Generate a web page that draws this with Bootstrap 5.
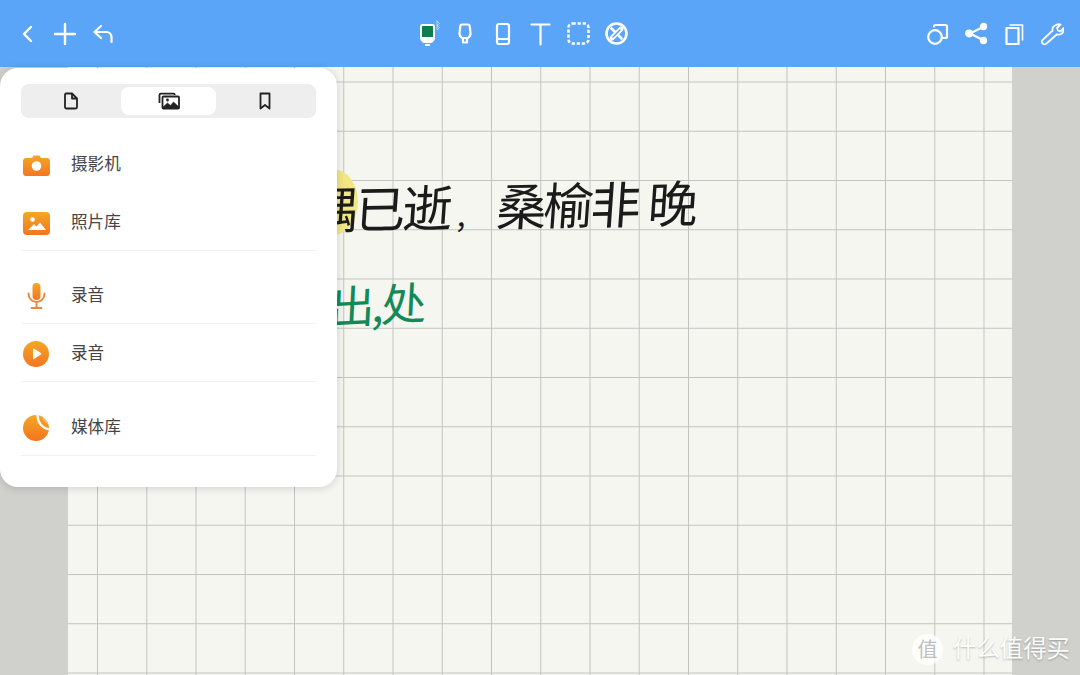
<!DOCTYPE html>
<html lang="zh-CN">
<head>
<meta charset="UTF-8">
<meta name="viewport" content="width=device-width, initial-scale=1.0">
<title>笔记</title>
<link rel="stylesheet" href="https://cdn.jsdelivr.net/npm/bootstrap@5.3.3/dist/css/bootstrap.min.css">
<style>
html, body { height: 100%; overflow: hidden; }
body { font-family: "Liberation Sans", "Noto Sans CJK SC", sans-serif; background: #d0d0cc; }
.app-shell { width: 1080px; height: 675px; position: relative; overflow: hidden; }
.top-bar { height: 67px; background: #5ba5f9; padding: 0 9px 0 8px; }
.top-bar svg { display: block; fill: none; stroke: #fff; stroke-width: 2.2; stroke-linecap: round; stroke-linejoin: round; }
.tool-slot { width: 38px; height: 38px; }
.slot-pen { padding-left: 6px; }
.tool-mid { margin-left: 2px; }
.stage { height: 608px; padding: 0 68px; }
.paper {
  height: 100%; position: relative; overflow: hidden; background-color: #f6f6f1;
  background-image: linear-gradient(to right, #c2c4bf 1px, transparent 1px), linear-gradient(to bottom, #c2c4bf 1px, transparent 1px);
  background-size: 49.25px 49.25px; background-position: 29px 14.5px;
}
.ink-mark { position: absolute; left: 240px; top: 102px; width: 50px; height: 66px; border-radius: 50%; background: #f3e684; }
.ink-line { position: absolute; white-space: nowrap; font-family: "Noto Sans CJK SC", sans-serif; line-height: 1; }
.ink-black { left: 194px; top: 112px; font-size: 50px; letter-spacing: -3px; color: #1b1b1b; transform: skewX(-5deg) rotate(-1deg); }
.ink-tick { display: inline-block; width: 47px; padding-left: 8px; font-size: 32px; }
.ink-late { margin-left: 10px; }
.ink-green { left: 262px; top: 213px; font-size: 45px; color: #128a57; transform: skewX(-6deg) rotate(-3deg); letter-spacing: -3px; }
.side-panel { position: absolute; left: 0; top: 68px; width: 337px; height: 419px; background: #fff; border-radius: 18px; box-shadow: 0 1px 8px rgba(0,0,0,.16); padding: 16px 21px 0; }
.seg-tabs { height: 34px; background: #eeeeee; border-radius: 8px; padding: 3px; }
.seg-item { width: 95px; height: 28px; border-radius: 8px; }
.seg-wide { width: 97px; padding-right: 3px; }
.seg-on { background: #fff; }
.seg-end { padding-left: 2px; }
.seg-tabs svg { display: block; fill: none; stroke: #222; stroke-width: 1.8; stroke-linejoin: round; }
.media-list { margin-top: 17px; }
.media-row { height: 58px; padding-top: 3px; font-size: 16.6px; color: #444; }
.row-line { border-bottom: 1px solid #f1f1f1; }
.gap-one { margin-top: 15px; }
.gap-two { margin-top: 16px; }
.media-ico { width: 30px; margin-right: 20px; }
.media-ico svg { display: block; margin: 0 auto; }
.mark-wm { position: absolute; left: 912px; top: 634px; color: #fff; text-shadow: 0 1px 2px rgba(0,0,0,.28); opacity: .92; }
.mark-disc { width: 31px; height: 31px; border-radius: 50%; background: rgba(255,255,255,.85); color: #bbb; font-size: 20px; text-shadow: none; }
.mark-name { margin-left: 10px; font-size: 23.4px; line-height: 1; }
</style>
</head>
<body>
<svg width="0" height="0" class="position-absolute">
  <defs>
    <linearGradient id="warm" x1="0" y1="0" x2="0" y2="1">
      <stop offset="0" stop-color="#f3a726"/>
      <stop offset="1" stop-color="#f5751f"/>
    </linearGradient>
  </defs>
</svg>

<div class="app-shell">
  <div class="top-bar d-flex align-items-center justify-content-between">
    <div class="d-flex align-items-center">
      <div class="tool-slot d-flex align-items-center justify-content-center"><svg width="14" height="20" viewBox="0 0 14 20"><path d="M11 3 4 10l7 7" stroke-width="2.400"/></svg></div>
      <div class="tool-slot d-flex align-items-center justify-content-center"><svg width="24" height="24" viewBox="0 0 24 24"><path d="M12 2v20M2 12h20" stroke-width="2.400"/></svg></div>
      <div class="tool-slot d-flex align-items-center justify-content-center"><svg width="22" height="20" viewBox="0 0 22 20"><path d="M9 2 2.500 8l6.500 6M2.500 8H14c3.500 0 5.500 2.500 5.500 5.500V18"/></svg></div>
    </div>

    <div class="tool-mid d-flex align-items-center">
      <div class="tool-slot slot-pen d-flex align-items-center justify-content-center"><svg width="22" height="28" viewBox="0 0 22 28"><rect x="2" y="5" width="13" height="13" rx="1.500" fill="#0b7d50" stroke-width="2"/><path d="M2 18c0 2 2 3 3 4h7c1-1 3-2 3-4z" fill="#fff"/><path d="M7 25h3"/><path d="M18 1l2.500 2.500-2.500 2 2.500 2-2.500 2.500V1z" stroke-width=".7" stroke-opacity=".7"/></svg></div>
      <div class="tool-slot d-flex align-items-center justify-content-center"><svg width="14" height="24" viewBox="0 0 14 24"><path d="M4 2.500h6c1 0 1.500.5 1.700 1.500l.8 7c.2 2-1.200 4-2.500 5H4c-1.300-1-2.700-3-2.500-5l.8-7c.2-1 .7-1.500 1.700-1.500z"/><path d="M5 16v4.500h4V16"/></svg></div>
      <div class="tool-slot d-flex align-items-center justify-content-center"><svg width="16" height="24" viewBox="0 0 16 24"><rect x="2" y="2" width="12" height="15" rx="2"/><path d="M2 17v3c0 1 1 2 2 2h8c1 0 2-1 2-2v-3"/></svg></div>
      <div class="tool-slot d-flex align-items-center justify-content-center"><svg width="21" height="24" viewBox="0 0 21 24"><path d="M1.500 2.500h18M10.500 2.500v20"/></svg></div>
      <div class="tool-slot d-flex align-items-center justify-content-center"><svg width="23" height="23" viewBox="0 0 23 23"><rect x="1.500" y="1.500" width="20" height="20" rx="4" stroke-dasharray="3.200 1.900" stroke-width="2.600" stroke-linecap="butt"/></svg></div>
      <div class="tool-slot d-flex align-items-center justify-content-center"><svg width="23" height="23" viewBox="0 0 23 23"><circle cx="11.500" cy="11.500" r="10" stroke-width="2.600"/><path d="M6.500 6.500l10 10" stroke-width="2.600"/><path d="M16 7l-9 9" stroke-width="5"/><path d="M15 8l-7 7" stroke="#5ba5f9" stroke-width="1.500"/></svg></div>
    </div>

    <div class="d-flex align-items-center">
      <div class="tool-slot d-flex align-items-center justify-content-center"><svg width="22" height="22" viewBox="0 0 22 22"><circle cx="8" cy="14" r="6.800"/><path d="M7 3.500c0-1 .5-1.500 1.500-1.500h10c1 0 1.500.5 1.500 1.500v10c0 1-.5 1.500-1.500 1.500H15"/></svg></div>
      <div class="tool-slot d-flex align-items-center justify-content-center"><svg width="23" height="23" viewBox="0 0 23 23"><circle cx="18.500" cy="4.500" r="2.600" fill="#fff"/><circle cx="4" cy="11.500" r="2.800" fill="#fff"/><circle cx="18.500" cy="18.500" r="2.600" fill="#fff"/><path d="M18 5 5 11.500 18 18"/></svg></div>
      <div class="tool-slot d-flex align-items-center justify-content-center"><svg width="19" height="22" viewBox="0 0 19 22"><rect x="1.500" y="5" width="12" height="16"/><path d="M5 2h12.500v15" stroke-width="1.600"/></svg></div>
      <div class="tool-slot d-flex align-items-center justify-content-center"><svg width="24" height="24" viewBox="0 0 24 24"><path d="M15 3.500c2-1.500 4.500-1.500 5.500-1l-3.500 3.500 1 2.500 2.500.8 3-3.300c.5 2.500-.2 4.500-2 5.800-1.500 1-3 1-4.500.5L6.500 21.500c-1.500 1.200-3 1-4-.2-1-1.200-.8-2.500.2-3.500L12.700 8.500c-.6-2-.2-3.800 2.300-5z" stroke-width="1.800"/></svg></div>
    </div>
  </div>

  <div class="stage">
    <div class="paper">
      <div class="ink-mark"></div>
      <div class="ink-line ink-black">东隅已逝<span class="ink-tick">,</span>桑榆非<span class="ink-late">晚</span></div>
      <div class="ink-line ink-green">出,处</div>
    </div>
  </div>

  <div class="side-panel">
    <div class="seg-tabs d-flex">
      <div class="seg-item seg-wide d-flex align-items-center justify-content-center">
        <svg width="16" height="18" viewBox="0 0 16 18"><path d="M3 1.500h6l5 5V15c0 1-.7 1.500-1.500 1.500h-9C2.700 16.500 2 16 2 15V3c0-1 .3-1.500 1-1.500z"/><path d="M9 1.500v5h5"/></svg>
      </div>
      <div class="seg-item seg-on d-flex align-items-center justify-content-center">
        <svg width="22" height="18" viewBox="0 0 22 18"><path d="M1.500 11V3c0-.8.5-1.300 1.300-1.300h12.700c.8 0 1.300.4 1.300 1.300"/><rect x="4.500" y="4.500" width="16.500" height="12" rx="1"/><path d="M4.500 16.500v-1l5-4.500 3 2.500 3-3.500 5.500 5v1.500z" fill="#222" stroke-width=".6"/><circle cx="9.500" cy="8" r="1.400" fill="#222" stroke="none"/></svg>
      </div>
      <div class="seg-item seg-end d-flex align-items-center justify-content-center">
        <svg width="14" height="18" viewBox="0 0 14 18"><path d="M2.500 1.500h9v15L7 13l-4.500 3.500z"/></svg>
      </div>
    </div>

    <div class="media-list">
      <div class="media-row d-flex align-items-center">
        <div class="media-ico"><svg width="27" height="21" viewBox="0 0 27 21"><path d="M3 3h6l1.500-2.500h6L18 3h6c1.500 0 3 1 3 3v12c0 2-1.500 3-3 3H3c-1.500 0-3-1-3-3V6c0-2 1.500-3 3-3z" fill="url(#warm)"/><circle cx="13.500" cy="11" r="4.800" fill="#fff"/></svg></div>
        <span>摄影机</span>
      </div>
      <div class="media-row row-line d-flex align-items-center">
        <div class="media-ico"><svg width="27" height="23" viewBox="0 0 27 23"><rect width="27" height="23" rx="4" fill="url(#warm)"/><circle cx="9.500" cy="7.500" r="2.300" fill="#fff"/><path d="M5 18l6-6 2.500 2.500 3.500-4 6 7.500z" fill="#fff"/></svg></div>
        <span>照片库</span>
      </div>

      <div class="media-row row-line gap-one d-flex align-items-center">
        <div class="media-ico"><svg width="19" height="26" viewBox="0 0 19 26"><rect x="5.500" y="0" width="8" height="17" rx="4" fill="url(#warm)"/><path d="M1.500 10.500c0 5 3.500 8.500 8 8.500s8-3.500 8-8.500M9.500 19v5.500M4.500 25h10" fill="none" stroke="#ec8638" stroke-width="1.900" stroke-linecap="round"/></svg></div>
        <span>录音</span>
      </div>
      <div class="media-row row-line d-flex align-items-center">
        <div class="media-ico"><svg width="26" height="26" viewBox="0 0 26 26"><circle cx="13" cy="13" r="13" fill="url(#warm)"/><path d="M10 8.500c0-.8.600-1.100 1.300-.7l6.500 4.200c.6.400.6 1.200 0 1.600l-6.500 4.200c-.7.400-1.300.1-1.300-.7z" fill="#fff"/></svg></div>
        <span>录音</span>
      </div>

      <div class="media-row row-line gap-two d-flex align-items-center">
        <div class="media-ico"><svg width="26" height="26" viewBox="0 0 26 26"><circle cx="13" cy="13" r="13" fill="url(#warm)"/><path d="M14.500 -1C14.500 7 18 13 27 14.500" fill="none" stroke="#fff" stroke-width="2.200"/><path d="M20 2 24 0 27 4 26 9C23 9 20 6 20 2z" fill="#fff" fill-opacity=".35"/></svg></div>
        <span>媒体库</span>
      </div>
    </div>
  </div>

  <div class="mark-wm d-flex align-items-center">
    <div class="mark-disc d-flex align-items-center justify-content-center">值</div>
    <div class="mark-name">什么值得买</div>
  </div>
</div>

<script src="https://cdn.jsdelivr.net/npm/bootstrap@5.3.3/dist/js/bootstrap.bundle.min.js"></script>
</body>
</html>
